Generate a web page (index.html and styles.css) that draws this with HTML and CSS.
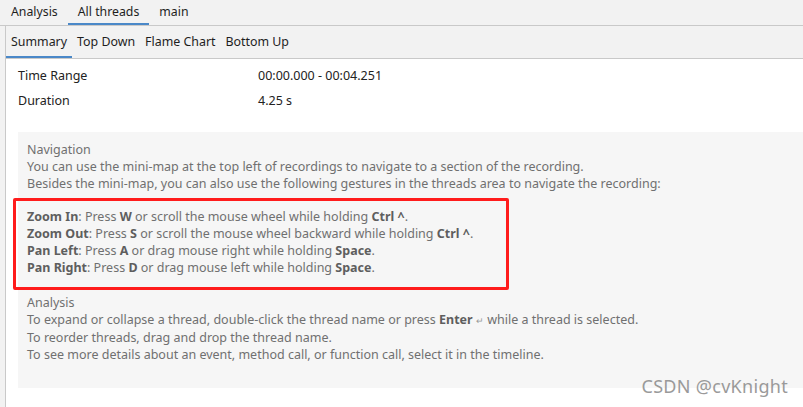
FILE: index.html
```html
<!DOCTYPE html>
<html>
<head>
<meta charset="utf-8">
<link rel="stylesheet" href="styles.css">
</head>
<body>
<div class="app">
  <div class="tabs top">
    <div class="tab">Analysis</div>
    <div class="tab active">All threads</div>
    <div class="tab">main</div>
  </div>
  <div class="main">
    <div class="tabs sub">
      <div class="tab active">Summary</div>
      <div class="tab">Top Down</div>
      <div class="tab">Flame Chart</div>
      <div class="tab">Bottom Up</div>
    </div>
    <div class="content">
      <div class="props">
        <div class="prop"><span class="key">Time Range</span><span class="val">00:00.000 - 00:04.251</span></div>
        <div class="prop"><span class="key">Duration</span><span class="val">4.25 s</span></div>
      </div>
      <div class="help">
        <p>Navigation</p>
        <p>You can use the mini-map at the top left of recordings to navigate to a section of the recording.</p>
        <p>Besides the mini-map, you can also use the following gestures in the threads area to navigate the recording:</p>
        <div class="mark">
          <p><b>Zoom In</b>: Press <b>W</b> or scroll the mouse wheel while holding <b>Ctrl ^</b>.</p>
          <p><b>Zoom Out</b>: Press <b>S</b> or scroll the mouse wheel backward while holding <b>Ctrl ^</b>.</p>
          <p><b>Pan Left</b>: Press <b>A</b> or drag mouse right while holding <b>Space</b>.</p>
          <p><b>Pan Right</b>: Press <b>D</b> or drag mouse left while holding <b>Space</b>.</p>
        </div>
        <p>Analysis</p>
        <p>To expand or collapse a thread, double-click the thread name or press <b>Enter</b> <span class="enter">&#x21B5;</span> while a thread is selected.</p>
        <p>To reorder threads, drag and drop the thread name.</p>
        <p>To see more details about an event, method call, or function call, select it in the timeline.</p>
      </div>
    </div>
  </div>
  <div class="watermark">CSDN @cvKnight</div>
</div>
</body>
</html>
```

FILE: styles.css
```css
html, body {
  margin: 0;
  padding: 0;
}
body {
  width: 803px;
  height: 407px;
  overflow: hidden;
  background: #f2f2f2;
  font-family: "Noto Sans", "Open Sans", sans-serif;
  font-size: 12px;
  color: #1e1e1e;
}
.app {
  position: relative;
  height: 407px;
  display: flex;
  flex-direction: column;
}
.tabs {
  display: flex;
  border-bottom: 1px solid #c9c9c9;
}
.tabs.top {
  height: 25px;
  padding-left: 1px;
}
.tabs.top .tab {
  padding: 0 10px;
  line-height: 24px;
  font-size: 12.3px;
}
.tab.active {
  box-shadow: inset 0 -2px 0 #4a88c8;
}
.main {
  flex: 1;
  margin-left: 5px;
  border-left: 1px solid #c9c9c9;
  display: flex;
  flex-direction: column;
}
.tabs.sub {
  height: 32px;
  align-items: stretch;
  padding-left: 0;
}
.tabs.sub .tab {
  padding: 0 5px;
  line-height: 32px;
  font-size: 12.4px;
}
.content {
  flex: 1;
  background: #ffffff;
  padding-left: 12px;
}
.props {
  padding-top: 4px;
  padding-bottom: 19px;
}
.prop {
  display: flex;
  height: 25px;
  align-items: center;
  font-size: 12.5px;
  color: #222;
}
.key {
  width: 240px;
}
.help {
  background: #f6f6f6;
  padding: 9px 0 25px 9px;
  color: #707070;
  font-size: 12.5px;
  line-height: 17px;
}
.help p {
  margin: 0;
}
.help b {
  color: #5e5e5e;
  font-weight: bold;
}
.mark {
  margin: 6px 0 4px -14px;
  width: 479px;
  border: 3px solid #ff1c1c;
  border-radius: 2px;
  padding: 7px 0 11px 11px;
}
.enter {
  font-size: 9px;
  color: #999;
}
.watermark {
  position: absolute;
  right: 15px;
  bottom: 9px;
  font-size: 18px;
  color: #9a9a9a;
  letter-spacing: 0.3px;
}
```
